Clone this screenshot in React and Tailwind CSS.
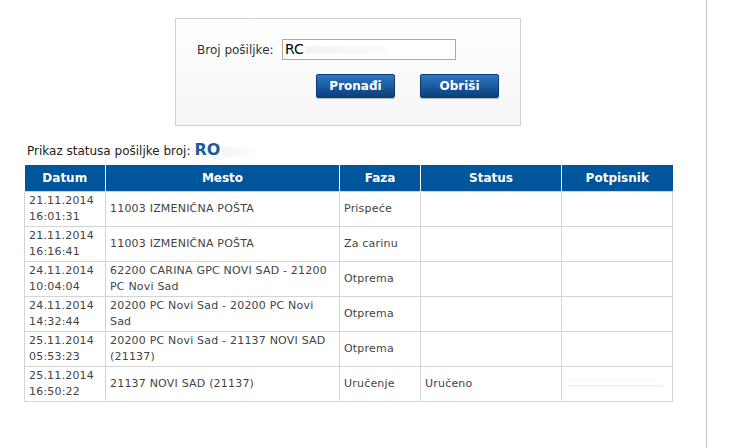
import React from 'react';

const rows = [
  { date: '21.11.2014', time: '16:01:31', place: '11003 IZMENIČNA POŠTA', phase: 'Prispeće', status: '', signer: false },
  { date: '21.11.2014', time: '16:16:41', place: '11003 IZMENIČNA POŠTA', phase: 'Za carinu', status: '', signer: false },
  { date: '24.11.2014', time: '10:04:04', place: '62200 CARINA GPC NOVI SAD - 21200 PC Novi Sad', phase: 'Otprema', status: '', signer: false },
  { date: '24.11.2014', time: '14:32:44', place: '20200 PC Novi Sad - 20200 PC Novi Sad', phase: 'Otprema', status: '', signer: false },
  { date: '25.11.2014', time: '05:53:23', place: '20200 PC Novi Sad - 21137 NOVI SAD (21137)', phase: 'Otprema', status: '', signer: false },
  { date: '25.11.2014', time: '16:50:22', place: '21137 NOVI SAD (21137)', phase: 'Uručenje', status: 'Uručeno', signer: true },
];

const headers = [
  { label: 'Datum', w: 'w-[81px]' },
  { label: 'Mesto', w: 'w-[234px]' },
  { label: 'Faza', w: 'w-[81px]' },
  { label: 'Status', w: 'w-[141px]' },
  { label: 'Potpisnik', w: 'w-[111px]' },
];

const btn =
  'w-[79px] h-[24px] rounded-[2px] border border-[#0b3f78] bg-gradient-to-b from-[#2f78c2] to-[#0a3e7c] text-white text-[12px] font-bold shadow-[0_1px_1px_rgba(0,0,0,0.25)]';

const cell = 'border border-[#d4d4d4] px-[4px] leading-[16px] align-middle tracking-[0.2px]';

const App = () => {
  return (
    <div className="h-screen bg-white font-['DejaVu_Sans','Verdana',sans-serif] text-[#333]">
      <div className="h-full w-[707px] border-r border-[#c8c8c8]">
        {/* Search box */}
        <div className="ml-[175px] pt-[18px]">
          <div className="w-[346px] h-[108px] border border-[#cfcfcf] bg-gradient-to-b from-white to-[#f6f6f6] pt-[20px] pl-[21px]">
            <div className="flex items-center">
              <span className="text-[12px] text-[#333] w-[85px]">Broj pošiljke:</span>
              <div className="w-[174px] h-[21px] border border-[#a9a9a9] bg-white flex items-center pl-[2px] text-[14px] text-black">
                <span>RC</span>
                <span className="ml-[1px] h-[8px] w-[82px] bg-gradient-to-r from-[#ececec] to-[#f8f8f8] opacity-60"></span>
              </div>
            </div>
            <div className="flex mt-[14px] ml-[119px] gap-[25px]">
              <button className={btn}>Pronađi</button>
              <button className={btn}>Obriši</button>
            </div>
          </div>
        </div>

        {/* Title */}
        <div className="ml-[27px] mt-[14px] flex items-end h-[20px] text-[12px] text-[#222]">
          <span>Prikaz statusa pošiljke broj:</span>
          <span className="ml-[4px] text-[16px] font-bold text-[#1b5c9e] leading-[20px]">RO</span>
          <span className="ml-[2px] mb-[3px] h-[10px] w-[40px] bg-gradient-to-r from-[#f5f5f5] to-white"></span>
        </div>

        {/* Table */}
        <table className="ml-[24px] mt-[5px] border-collapse text-[11px] text-[#444]">
          <thead>
            <tr className="bg-[#01559a] text-white h-[26px]">
              {headers.map((h, i) => (
                <th
                  key={h.label}
                  className={`${h.w} text-[12px] font-bold text-center ${i > 0 ? 'border-l border-white' : ''}`}
                >
                  {h.label}
                </th>
              ))}
            </tr>
          </thead>
          <tbody>
            {rows.map((r, i) => (
              <tr key={i} className="h-[35px]">
                <td className={cell}>
                  {r.date}
                  <br />
                  {r.time}
                </td>
                <td className={cell}>{r.place}</td>
                <td className={cell}>{r.phase}</td>
                <td className={`${cell} text-[#4a3a55]`}>{r.status}</td>
                <td className="border border-[#d4d4d4] px-[4px] align-middle">
                  {r.signer && (
                    <div className="flex flex-col gap-[4px] pl-[2px]">
                      <span className="h-[1px] w-[90px] bg-[#f7f7f7]"></span>
                      <span className="h-[2px] w-[95px] bg-[#f1f1f1]"></span>
                    </div>
                  )}
                </td>
              </tr>
            ))}
          </tbody>
        </table>
      </div>
    </div>
  );
};

export default App;
